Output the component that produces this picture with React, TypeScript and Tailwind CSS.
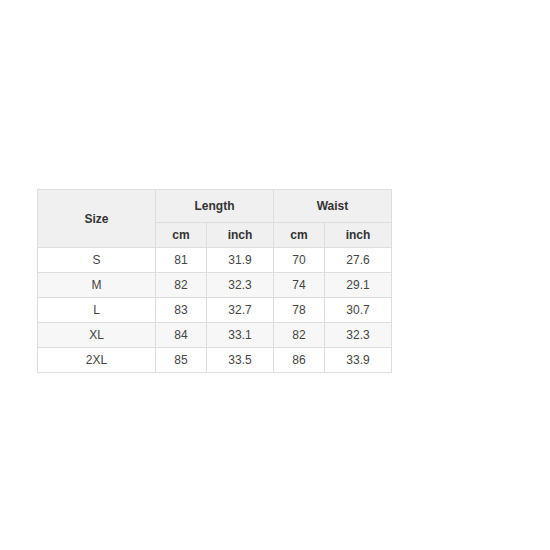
import React from "react";

const rows = [
  ["S", "81", "31.9", "70", "27.6"],
  ["M", "82", "32.3", "74", "29.1"],
  ["L", "83", "32.7", "78", "30.7"],
  ["XL", "84", "33.1", "82", "32.3"],
  ["2XL", "85", "33.5", "86", "33.9"],
];

export default function App() {
  const th = "border border-[#dddddd] bg-[#f0f0f0] font-bold text-[#333333] text-center p-0";
  const td = "border border-[#dddddd] text-center text-[#444444] p-0";
  return (
    <div
      className="w-[550px] h-[550px] bg-white pl-[37px] pt-[189px]"
      style={{ fontFamily: '"Liberation Sans", Arial, sans-serif' }}
    >
      <table className="table-fixed border-collapse w-[355px] text-[12px] leading-[14px]">
        <colgroup>
          <col className="w-[118px]" />
          <col className="w-[51px]" />
          <col className="w-[67px]" />
          <col className="w-[51px]" />
          <col className="w-[67px]" />
        </colgroup>
        <thead>
          <tr className="h-[33px]">
            <th rowSpan={2} className={th}>Size</th>
            <th colSpan={2} className={th}>Length</th>
            <th colSpan={2} className={th}>Waist</th>
          </tr>
          <tr className="h-[25px]">
            <th className={th}>cm</th>
            <th className={th}>inch</th>
            <th className={th}>cm</th>
            <th className={th}>inch</th>
          </tr>
        </thead>
        <tbody>
          {rows.map((r, i) => (
            <tr key={i} className={`h-[25px] ${i % 2 === 1 ? "bg-[#f7f7f7]" : "bg-white"}`}>
              {r.map((c, j) => (
                <td key={j} className={td}>{c}</td>
              ))}
            </tr>
          ))}
        </tbody>
      </table>
    </div>
  );
}
